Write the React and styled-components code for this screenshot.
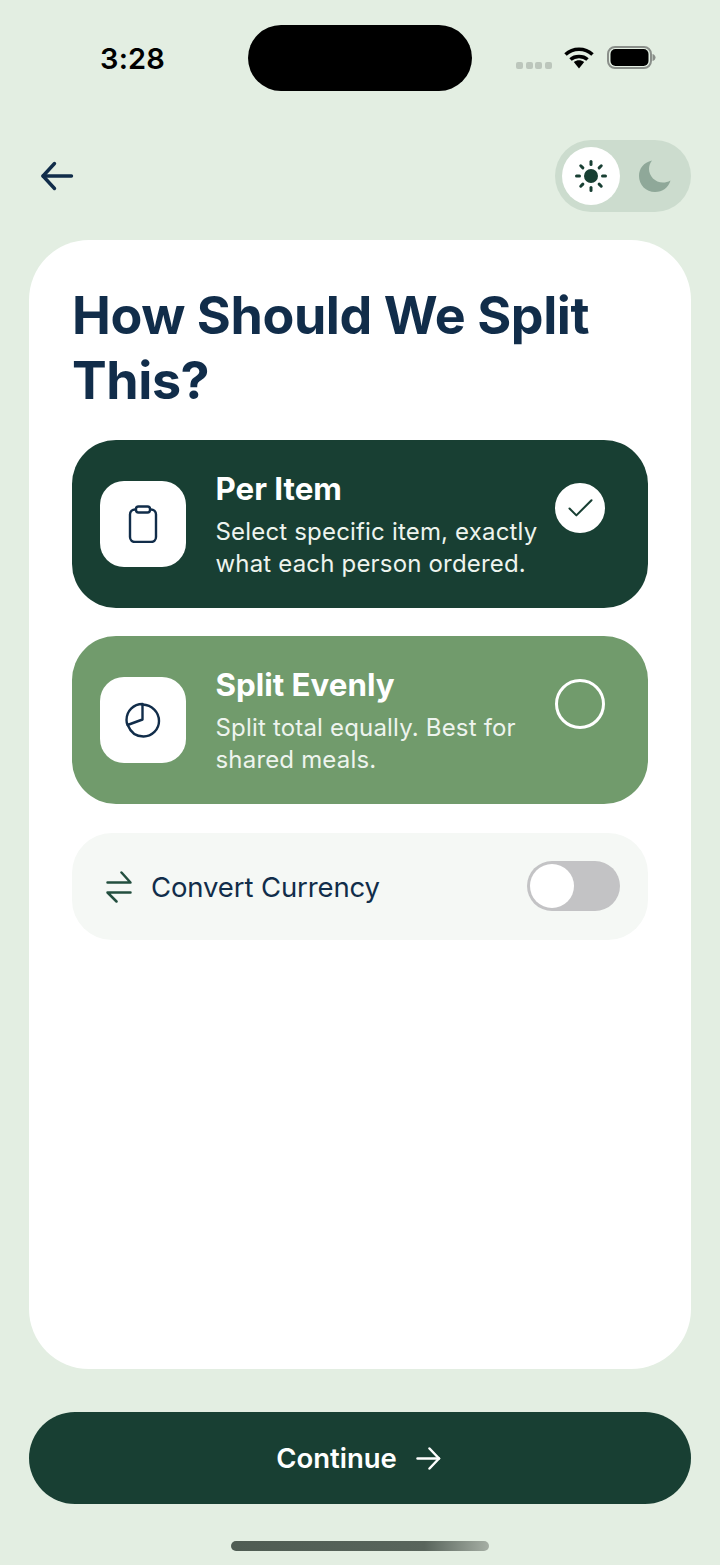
import React from "react";
import styled, { createGlobalStyle } from "styled-components";
import { Check } from "lucide-react";

const GlobalStyle = createGlobalStyle`
  html, body {
    margin: 0;
    padding: 0;
    background: #e3eee2;
  }
  * {
    box-sizing: border-box;
  }
`;

const Page = styled.div`
  width: 720px;
  height: 1565px;
  background: #e3eee2;
  font-family: Inter, "Liberation Sans", sans-serif;
  display: flex;
  flex-direction: column;
  overflow: hidden;
`;

const StatusBar = styled.div`
  height: 66px;
  margin-top: 25px;
  display: flex;
  align-items: center;
`;

const Time = styled.div`
  width: 248px;
  padding-left: 100px;
  font-size: 29px;
  font-weight: 600;
  color: #000000;
  letter-spacing: 0.2px;
`;

const Island = styled.div`
  width: 224px;
  height: 66px;
  background: #000000;
  border-radius: 33px;
`;

const StatusIcons = styled.div`
  margin-left: 44px;
  display: flex;
  align-items: center;
  margin-top: -1px;
`;

const SignalDots = styled.div`
  display: flex;
  gap: 2.5px;
  margin-top: 16px;
  margin-right: 12px;
`;

const SignalDot = styled.span`
  width: 7px;
  height: 7px;
  border-radius: 2px;
  background: #bcc6bc;
`;

const BatterySlot = styled.div`
  margin-left: 13px;
  display: flex;
`;

const TopBar = styled.div`
  height: 72px;
  margin-top: 49px;
  padding: 0 29px 0 40px;
  display: flex;
  align-items: center;
  justify-content: space-between;
`;

const ThemeToggle = styled.div`
  width: 136px;
  height: 72px;
  border-radius: 36px;
  background: #ccdcce;
  padding: 7px;
  display: flex;
  align-items: center;
`;

const ThemeKnob = styled.div`
  width: 58px;
  height: 58px;
  border-radius: 50%;
  background: #ffffff;
  display: flex;
  align-items: center;
  justify-content: center;
`;

const MoonSlot = styled.div`
  width: 58px;
  margin-left: 6px;
  display: flex;
  align-items: center;
  justify-content: center;
`;

const Sheet = styled.main`
  width: 662px;
  height: 1129px;
  margin: 28px 0 0 29px;
  padding: 43px 43px 0;
  background: #ffffff;
  border-radius: 60px;
`;

const Heading = styled.h1`
  margin: 0 0 27px;
  font-size: 52px;
  line-height: 65px;
  font-weight: 700;
  color: #112d4a;
  letter-spacing: -0.42px;
`;

const OptionList = styled.div`
  display: flex;
  flex-direction: column;
  gap: 28px;
`;

const OptionCard = styled.div`
  height: 168px;
  border-radius: 44px;
  background: ${(p) => (p.$selected ? "#183f33" : "#719b6c")};
  padding: 0 43px 0 28px;
  display: flex;
  align-items: center;
`;

const OptionIcon = styled.div`
  width: 86px;
  height: 86px;
  flex: none;
  border-radius: 24px;
  background: #ffffff;
  color: #112d4a;
  display: flex;
  align-items: center;
  justify-content: center;
`;

const OptionText = styled.div`
  flex: 1;
  margin-left: 29.5px;
  color: #ffffff;
`;

const OptionTitle = styled.div`
  font-size: 31.3px;
  line-height: 40px;
  font-weight: 700;
`;

const OptionDesc = styled.div`
  margin-top: 7px;
  font-size: 24px;
  line-height: 32px;
  font-weight: 400;
  letter-spacing: 0.18px;
  color: #eef4ee;
`;

const Radio = styled.div`
  width: 50px;
  height: 50px;
  flex: none;
  margin-top: -32px;
  border-radius: 50%;
  border: 3px solid #ffffff;
  background: ${(p) => (p.$checked ? "#ffffff" : "transparent")};
  color: #183f33;
  display: flex;
  align-items: center;
  justify-content: center;
`;

const ConvertRow = styled.div`
  height: 107px;
  margin-top: 29px;
  border-radius: 40px;
  background: #f5f8f5;
  padding: 0 28px 0 34px;
  display: flex;
  align-items: center;
`;

const ConvertLabel = styled.div`
  flex: 1;
  margin-left: 19px;
  font-size: 27.5px;
  font-weight: 400;
  letter-spacing: -0.12px;
  color: #112d4a;
`;

const Switch = styled.div`
  width: 93px;
  height: 50px;
  margin-top: -2px;
  border-radius: 25px;
  background: #c3c3c5;
  padding: 3px;
`;

const SwitchKnob = styled.div`
  width: 44px;
  height: 44px;
  border-radius: 50%;
  background: #ffffff;
`;

const ContinueButton = styled.button`
  width: 662px;
  height: 92px;
  margin: 43px 0 0 29px;
  padding: 0 3px 0 0;
  border: none;
  border-radius: 46px;
  background: #183f33;
  color: #ffffff;
  font-family: inherit;
  font-size: 27.5px;
  font-weight: 600;
  display: flex;
  align-items: center;
  justify-content: center;
  gap: 19px;
`;

const HomeIndicator = styled.div`
  width: 258px;
  height: 10px;
  margin: 37px 0 0 231px;
  border-radius: 5px;
  background: linear-gradient(90deg, #4f5c53 0%, #59655c 75%, #a5aea4 100%);
`;

function WifiIcon() {
  return (
    <svg width="30" height="23" viewBox="0 0 30 23" fill="none" stroke="#000" strokeWidth="3.6">
      <path d="M1.500 8.500C9 1.500 21 1.500 28.500 8.500" />
      <path d="M6.500 13.500C11 9.500 19 9.500 23.500 13.500" />
      <path d="M9.800 16L15 22.500L20.200 16C17 13.500 13 13.500 9.800 16Z" fill="#000" stroke="none" />
    </svg>
  );
}

function BatteryIcon() {
  return (
    <svg width="49" height="23" viewBox="0 0 49 23">
      <rect x="1" y="1" width="43" height="21" rx="7" fill="none" stroke="#8a8f8a" strokeWidth="2" />
      <rect x="3.500" y="3" width="38" height="17" rx="5" fill="#000" />
      <path d="M45.500 8C47.500 8.500 48.500 10 48.500 11.500S47.500 14.500 45.500 15Z" fill="#8a8f8a" />
    </svg>
  );
}

function BackArrowIcon() {
  return (
    <svg width="34" height="30" viewBox="0 0 34 30" fill="none" stroke="#112d4a" strokeWidth="3.4" strokeLinecap="round" strokeLinejoin="round">
      <path d="M3 15H31.500" />
      <path d="M14.500 2.500L3 15L14.500 27.500" />
    </svg>
  );
}

function ForwardArrowIcon() {
  return (
    <svg width="25" height="23" viewBox="0 0 25 23" fill="none" stroke="currentColor" strokeWidth="2.500" strokeLinecap="round" strokeLinejoin="round">
      <path d="M1.500 11.500H23" />
      <path d="M13.500 1.500L23 11.500L13.500 21.500" />
    </svg>
  );
}

function SunIcon() {
  const rays = [0, 45, 90, 135, 180, 225, 270, 315];
  return (
    <svg width="34" height="34" viewBox="0 0 34 34" fill="#183f33">
      <circle cx="17" cy="17" r="7" />
      {rays.map((a) => (
        <rect key={a} x="15.500" y="1" width="3" height="6" rx="1.500" transform={`rotate(${a} 17 17)`} />
      ))}
    </svg>
  );
}

function MoonIcon() {
  return (
    <svg width="34" height="34" viewBox="0 0 34 34">
      <path
        d="M14 1.500C5.500 3.500 1 9.500 1 17c0 9 7 16 16 16 7.500 0 13.500-4.500 15.500-11.500-2.500 1.500-5 2-7.500 2C17 23.500 11 17 11 10c0-3 1-6 3-8.500Z"
        fill="#8fa899"
      />
    </svg>
  );
}

function ClipboardIcon() {
  return (
    <svg width="30" height="38" viewBox="0 0 30 38" fill="none" stroke="currentColor" strokeWidth="2.400" strokeLinejoin="round">
      <rect x="2" y="4.500" width="26" height="32.500" rx="5" />
      <rect x="8" y="1.500" width="14" height="6" rx="2.500" fill="#fff" />
    </svg>
  );
}

function PieIcon() {
  return (
    <svg width="36" height="36" viewBox="0 0 36 36" fill="none" stroke="currentColor" strokeWidth="2.400" strokeLinejoin="round" strokeLinecap="round">
      <path d="M17.500 2C8.500 2 1.500 9 1.500 18c0 2 .4 3.500 1 5L17.500 17.500Z" />
      <path d="M17.500 2.500C27 3 34 10 34 19c0 8.500-7 15.500-15.500 15.500C11 34.500 5.500 30 3 23.500" />
    </svg>
  );
}

function SwapIcon() {
  return (
    <svg width="26" height="32" viewBox="0 0 26 32" fill="none" stroke="#234f3f" strokeWidth="2.500" strokeLinecap="round" strokeLinejoin="round">
      <path d="M1.500 11.500H24.500L15.500 1.500" />
      <path d="M24.500 21.500H1.500L10.500 30.500" />
    </svg>
  );
}

export default function App() {
  return (
    <Page>
      <GlobalStyle />
      <StatusBar>
        <Time>3:28</Time>
        <Island />
        <StatusIcons>
          <SignalDots>
            <SignalDot />
            <SignalDot />
            <SignalDot />
            <SignalDot />
          </SignalDots>
          <WifiIcon />
          <BatterySlot>
            <BatteryIcon />
          </BatterySlot>
        </StatusIcons>
      </StatusBar>

      <TopBar>
        <BackArrowIcon />
        <ThemeToggle>
          <ThemeKnob>
            <SunIcon />
          </ThemeKnob>
          <MoonSlot>
            <MoonIcon />
          </MoonSlot>
        </ThemeToggle>
      </TopBar>

      <Sheet>
        <Heading>
          How Should We Split
          <br />
          This?
        </Heading>
        <OptionList>
          <OptionCard $selected>
            <OptionIcon>
              <ClipboardIcon />
            </OptionIcon>
            <OptionText>
              <OptionTitle>Per Item</OptionTitle>
              <OptionDesc>
                Select specific item, exactly
                <br />
                what each person ordered.
              </OptionDesc>
            </OptionText>
            <Radio $checked>
              <Check size={33} strokeWidth={1.5} />
            </Radio>
          </OptionCard>
          <OptionCard>
            <OptionIcon>
              <PieIcon />
            </OptionIcon>
            <OptionText>
              <OptionTitle>Split Evenly</OptionTitle>
              <OptionDesc>
                Split total equally. Best for
                <br />
                shared meals.
              </OptionDesc>
            </OptionText>
            <Radio />
          </OptionCard>
        </OptionList>
        <ConvertRow>
          <SwapIcon />
          <ConvertLabel>Convert Currency</ConvertLabel>
          <Switch>
            <SwitchKnob />
          </Switch>
        </ConvertRow>
      </Sheet>

      <ContinueButton>
        Continue
        <ForwardArrowIcon />
      </ContinueButton>
      <HomeIndicator />
    </Page>
  );
}
